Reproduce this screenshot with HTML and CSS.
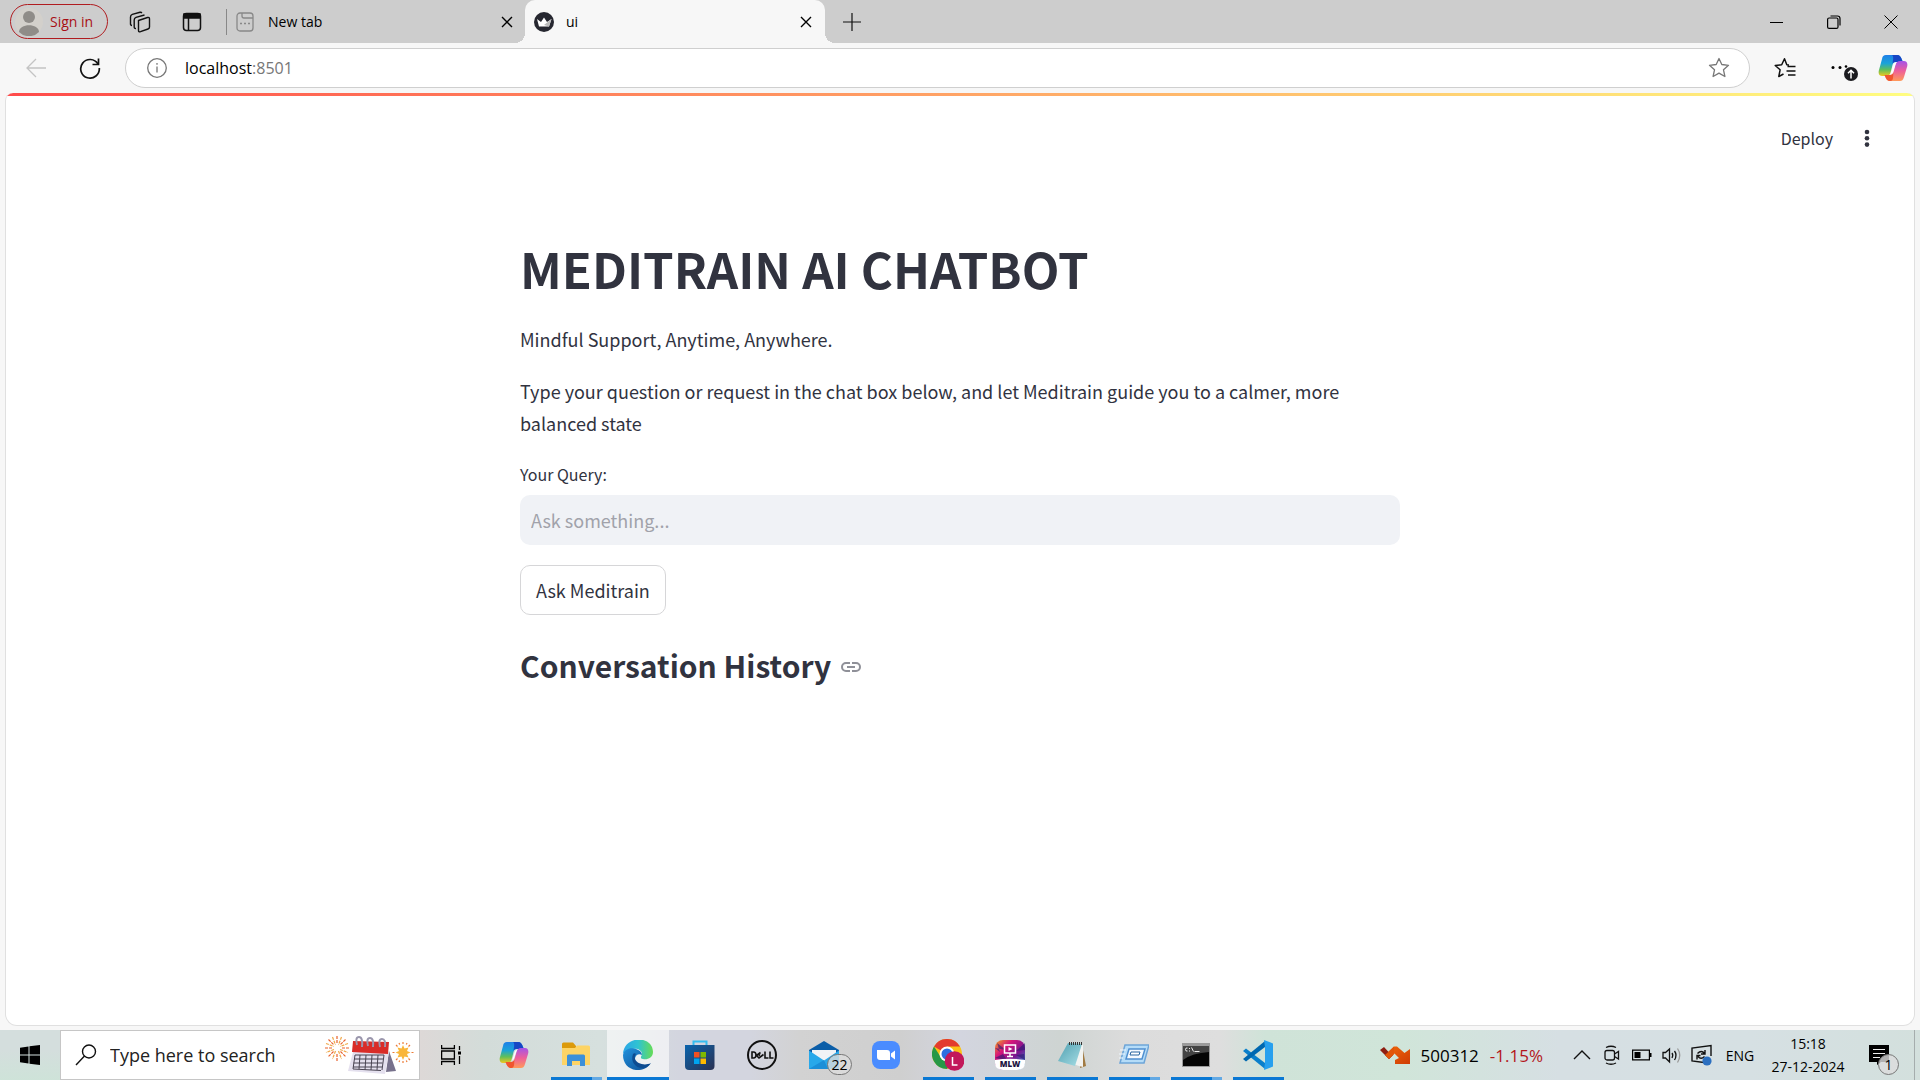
FILE: index.html
```html
<!DOCTYPE html>
<html lang="en">
<head>
<meta charset="utf-8">
<title>ui</title>
<link rel="stylesheet" href="styles.css">
</head>
<body>
<svg class="defs" aria-hidden="true">
  <defs>
    <linearGradient id="cpA" x1="0" y1="0" x2="0" y2="1"><stop offset="0" stop-color="#1f7fe8"/><stop offset=".4" stop-color="#1aa3d8"/><stop offset=".7" stop-color="#5fbf5a"/><stop offset="1" stop-color="#f0c81e"/></linearGradient>
    <linearGradient id="cpB" x1="0" y1="0" x2="0" y2="1"><stop offset="0" stop-color="#a453e8"/><stop offset=".5" stop-color="#ee5f9a"/><stop offset="1" stop-color="#ff9a5a"/></linearGradient>
    <linearGradient id="edA" x1="0" y1="0" x2="1" y2="0"><stop offset="0" stop-color="#2ba5e8"/><stop offset=".5" stop-color="#2fc3d2"/><stop offset="1" stop-color="#66dc55"/></linearGradient>
    <linearGradient id="edB" x1="0" y1="0" x2="1" y2="1"><stop offset="0" stop-color="#2391dc"/><stop offset="1" stop-color="#0c4f96"/></linearGradient>
    <linearGradient id="stA" x1="0" y1="0" x2="1" y2="1"><stop offset="0" stop-color="#0a64ad"/><stop offset="1" stop-color="#2b3152"/></linearGradient>
    <linearGradient id="mlA" x1="0" y1="0" x2="1" y2="1"><stop offset="0" stop-color="#f2a21e"/><stop offset=".3" stop-color="#d5157a"/><stop offset=".6" stop-color="#7a1590"/><stop offset="1" stop-color="#22a6d8"/></linearGradient>
    <linearGradient id="npA" x1="0" y1="0" x2="1" y2="1"><stop offset="0" stop-color="#4f9fb0"/><stop offset="1" stop-color="#a9dfe6"/></linearGradient>
    <linearGradient id="upA" x1="0" y1="0" x2="1" y2="1"><stop offset="0" stop-color="#f06a0a"/><stop offset="1" stop-color="#cf3c05"/></linearGradient>
    <symbol id="copilot" viewBox="0 0 30 28">
      <path d="M8 1h11c3 0 4 2 5 5l1 2h-7c-2 0-3 1-3.500 3L13 17c-1 4-2 5-5 5H4c-3 0-4-3-3-6L4 5c.6-3 1.500-4 4-4z" fill="url(#cpA)"/>
      <path d="M14 1h5c3 0 4 2 5 5l1 2h-7c-2 0-3 .5-3.500 2C15 6 16 2 14 1z" fill="#1746c4"/>
      <path d="M22 27H12c-3 0-4-2-5-5l-.5-1H12c2 0 3-1 3.500-3l2-7c1-3 2-4 4.500-4h4c3 0 4 3 3 6l-3 10c-1 3-2 4-4 4z" fill="url(#cpB)"/>
      <path d="M6.500 21H12c2 0 3-1 3.500-3-.5 5 0 9-3 9s-4.500-2-5.500-5z" fill="#f0552f"/>
      <path d="M18.500 8.500q-2 0-2.800 2.500L13 19.500q1.500-.3 2-2L17.500 10q.5-1.500 1-1.500z" fill="#fff"/>
    </symbol>
    <symbol id="close" viewBox="0 0 12 12"><path d="M1 1l10 10M11 1L1 11" stroke="currentColor" stroke-width="1.4"/></symbol>
  </defs>
</svg>

<header class="browser">
  <div class="tabstrip">
    <button class="signin"><svg class="avatar" viewBox="0 0 28 28"><circle cx="14" cy="14" r="14" fill="#d3d0cb"/><circle cx="14" cy="9" r="6" fill="#8f8c88"/><path d="M4 24c0-9 20-9 20 0a14 14 0 0 1-20 0z" fill="#8f8c88"/></svg>Sign in</button>
    <button class="strip-btn" aria-label="Workspaces"><svg width="22" height="22" viewBox="0 0 22 22" fill="none" stroke="#111" stroke-width="1.4"><path d="M9.500 9.500l9-3q2-.5 2 1.500v8q0 1.500-1.500 2l-7.500 2.700q-2 .6-2-1.300z"/><path d="M7 17.500q-1.800.2-1.800-1.500V9q0-2 1.800-2.700L15.500 4"/><path d="M3 14.500q-1.500 0-1.500-1.500V6q0-2 1.800-2.600L11 1.300q1.300-.3 1.800.8"/></svg></button>
    <button class="strip-btn" aria-label="Tab actions"><svg width="20" height="20" viewBox="0 0 20 20" fill="none" stroke="#111" stroke-width="1.500"><rect x="1.500" y="1.500" width="17" height="17" rx="3"/><path d="M2 2h16v4H2z" fill="#111"/><path d="M6.500 6v12"/></svg></button>
    <div class="tab tab-idle"><svg width="18" height="20" viewBox="0 0 18 20" fill="none" stroke="#888" stroke-width="1.300"><rect x="1" y="1" width="16" height="18" rx="3"/><path d="M6 1v3q0 2 2 2h9M4 11.500h2M8 11.500h2M12 11.500h2"/></svg><span class="tab-title">New tab</span><button class="tab-close" aria-label="Close tab"><svg width="12" height="12"><use href="#close"/></svg></button></div>
    <div class="tab tab-active"><svg width="20" height="20" viewBox="0 0 20 20"><circle cx="10" cy="10" r="10" fill="#262730"/><path d="M3 7l4 3 3-4.500L13 10l4.500-3-2.500 7.500H5z" fill="#fff"/><path d="M17.500 7L10 13l5 1.500z" fill="#bbb"/></svg><span class="tab-title">ui</span><button class="tab-close" aria-label="Close tab"><svg width="12" height="12"><use href="#close"/></svg></button></div>
    <button class="new-tab" aria-label="New tab"><svg width="18" height="18" viewBox="0 0 18 18" stroke="#111" stroke-width="1.200"><path d="M9 0v18M0 9h18"/></svg></button>
    <div class="window-controls">
      <button aria-label="Minimize"><svg width="14" height="14" viewBox="0 0 14 14" stroke="#000"><path d="M0 7.500h13"/></svg></button>
      <button aria-label="Restore"><svg width="14" height="14" viewBox="0 0 14 14" fill="none" stroke="#000" stroke-width="1.200"><rect x=".6" y="3" width="10.400" height="10.400" rx="1.500"/><path d="M3.500 1h7q2.500 0 2.500 2.500v7"/></svg></button>
      <button aria-label="Close window"><svg width="14" height="14" viewBox="0 0 14 14" stroke="#000"><path d="M.5.5l13 13M13.500.5l-13 13"/></svg></button>
    </div>
  </div>
  <div class="toolbar">
    <button class="tool" aria-label="Back"><svg width="20" height="20" viewBox="0 0 20 20" fill="none" stroke="#c4c4c4" stroke-width="1.300"><path d="M20 10H1M10 1L1 10l9 9"/></svg></button>
    <button class="tool" aria-label="Reload"><svg width="22" height="22" viewBox="0 0 22 22" fill="none" stroke="#111" stroke-width="1.700"><path d="M19 7A9.300 9.300 0 1 0 20.300 11"/><path d="M19.500 1.500V7.500H13.500"/></svg></button>
    <div class="address">
      <svg width="20" height="20" viewBox="0 0 20 20" fill="none" stroke="#777" stroke-width="1.300"><circle cx="10" cy="10" r="9.300"/><path d="M10 8.500v6M10 5v1.700"/></svg>
      <a class="url" href="#"><span>localhost</span><span class="port">:8501</span></a>
      <button aria-label="Add to favorites"><svg width="22" height="22" viewBox="0 0 22 22" fill="none" stroke="#777" stroke-width="1.300" stroke-linejoin="round"><path d="M11 1.500l2.800 6 6.700.8-5 4.500 1.400 6.700-5.900-3.400-5.900 3.400 1.400-6.700-5-4.500 6.700-.8z"/></svg></button>
    </div>
    <button class="tool" aria-label="Favorites"><svg width="22" height="22" viewBox="0 0 22 22" fill="none" stroke="#111" stroke-width="1.500" stroke-linejoin="round"><path d="M15 8l-2.200-.3L10.500 1.800 7.700 7.700 1.200 8.500l4.900 4.300-1.300 6.700L9.500 17M13.500 9.500H21.500M12.500 14h9M14 18h7.500"/></svg></button>
    <button class="tool" aria-label="Settings and more"><svg width="42" height="28" viewBox="0 0 42 28"><circle cx="15" cy="13.500" r="1.500"/><circle cx="22" cy="13.500" r="1.500"/><circle cx="28" cy="12.500" r="1.300"/><circle cx="33" cy="20" r="7" fill="#1b1b1f"/><path d="M33 24.500v-8M30 19.300l3-3 3 3" stroke="#fff" stroke-width="1.500" fill="none"/></svg></button>
    <button class="tool" aria-label="Copilot"><svg width="30" height="28"><use href="#copilot"/></svg></button>
  </div>
</header>

<main class="page">
  <div class="app-bar"><button>Deploy</button><button class="kebab" aria-label="Main menu"><svg width="6" height="20" viewBox="0 0 6 20" fill="#31333f"><circle cx="3" cy="4" r="2.300"/><circle cx="3" cy="10.300" r="2.300"/><circle cx="3" cy="16.600" r="2.300"/></svg></button></div>
  <form class="content">
    <h1>MEDITRAIN AI CHATBOT</h1>
    <p>Mindful Support, Anytime, Anywhere.</p>
    <p>Type your question or request in the chat box below, and let Meditrain guide you to a calmer, more balanced state</p>
    <label for="query">Your Query:</label>
    <input id="query" type="text" placeholder="Ask something...">
    <button class="ask" type="button">Ask Meditrain</button>
    <h2>Conversation History <a href="#" aria-label="Link to heading"><svg width="20" height="10" viewBox="0 0 20 10" fill="none" stroke="#8f9098" stroke-width="2"><path d="M9 1H5a4 4 0 0 0 0 8h4M11 1h4a4 4 0 0 1 0 8h-4M6 5h8"/></svg></a></h2>
  </form>
</main>

<footer class="taskbar">
  <button class="start" aria-label="Start"><svg width="20" height="20" viewBox="0 0 20 20"><path d="M0 2.700L8.500 1.500V9.500H0zM9.500 1.300L20 0v9.500H9.500zM0 10.500h8.500v8L0 17.300zM9.500 10.500H20V20L9.500 18.700z"/></svg></button>
  <label class="search">
    <svg width="22" height="22" viewBox="0 0 22 22" fill="none" stroke="#111" stroke-width="1.400"><circle cx="14" cy="7.500" r="6.500"/><path d="M9.500 12L1 21"/></svg>
    <input type="text" placeholder="Type here to search" aria-label="Search">
    <svg width="90" height="40" viewBox="0 0 90 40">
      <g fill="none" stroke-width="1.200" stroke-dasharray="3 1"><g stroke="#e8622d"><path d="M13 1v7M13 19v7M1 13h7M18 13h7M4.500 4.500l5 5M16.500 16.500l5 5M21.500 4.500l-5 5M9.500 16.500l-5 5"/></g><g stroke="#f0a848"><path d="M8.500 2l3 8M14.500 16l3 8M2 8.500l8 3M16 14.500l8 3M17.500 2l-3 8M11.500 16l-3 8M24 8.500l-8 3M10 14.500l-8 3"/></g></g>
      <path d="M65 16l7 20-10 1z" fill="#77718c"/><path d="M29 17h36l-4 22-37-3z" fill="#e4e0ee"/><path d="M29 6l36 1-1 12-36-2z" fill="#d92c28"/>
      <path d="M31 20h29M30 24h29M29.500 28h29M29 32h29M31 20l-2 14M36 20l-1 14M42 20l-1 15M48 20l-1 15M54 20l-1 15M60 20l-2 15M29 34l28 1.500" stroke="#494452" stroke-width="1" fill="none"/>
      <g fill="none" stroke="#9a96ac" stroke-width="2"><path d="M33 10q-2-8 2-8t3 10M44 11q-2-8 2-8t3 9M56 12q-2-8 2-8t3 8"/></g>
      <path d="M79 10l1.500 3.500 4-1-1.500 3.500 3.500 1.500-3.500 1.500 1.500 3.500-4-1L79 25l-1.500-3.500-4 1 1.500-3.500-3.500-1.500 3.500-1.500-1.500-3.500 4 1z" fill="#f9b63a"/><path d="M79 7v2M79 26v2M68.500 17.500h2M87.500 17.500h2M72 10l1.500 1.500M86 25l-1.500-1.500M72 25l1.500-1.500M86 10l-1.500 1.500M75 8l.7 1.500M83 8l-.7 1.500M75 27l.7-1.500M83 27l-.7-1.500" stroke="#ec7c37" stroke-width="1.200"/>
    </svg>
  </label>
  <button class="app" aria-label="Task view"><svg width="20" height="20" viewBox="0 0 20 20" fill="none" stroke="#000" stroke-width="1.300"><path d="M.6 0v3.500h12.800V0M.6 6h12.800v8H.6zM.6 20v-3.500h12.800V20M18.500 1v4M18.500 11v8"/><path d="M17 6.500h3v3h-3z" fill="#000" stroke="none"/></svg></button>
  <nav class="apps">
    <button class="app" aria-label="Copilot"><svg width="30" height="28"><use href="#copilot"/></svg></button>
    <button class="app open stacked" aria-label="File Explorer"><svg width="28" height="26" viewBox="0 0 28 26"><path d="M0 2q0-1.500 1.500-1.500H11l3 3.500v6H0z" fill="#dc9a0a"/><path d="M0 6h13l2-2.500h11.500q1.500 0 1.500 1.500v18H0z" fill="#fdd465"/><path d="M5 24V14q0-1.500 1.500-1.500h15q1.500 0 1.500 1.500v10h-5v-5h-8v5z" fill="#3c90d8"/></svg></button>
    <button class="app open current" aria-label="Edge"><svg width="30" height="30" viewBox="0 0 30 30"><path d="M0 14C1-5 30-5 30 12c0 6-6 8-10 7-4-1-1-3-1-5 0-4-5-6-9-5C5 9.500 1 12 0 14z" fill="url(#edA)"/><path d="M0 15c1-6 8-8 13-6 3 1 6 3 6 6-3-2-7 0-7 4 0 6 8 8 15 5-4 6-10 6-14 6C5 29 0 23 0 15z" fill="url(#edB)"/><path d="M10 14c-3 8 3 15 11 14 3-1 5-2 7-5-6 3-14 1-16-4-.5-2 0-4 1-5-1-1-2-1-3 0z" fill="#0d4c91"/></svg></button>
    <button class="app" aria-label="Store"><svg width="30" height="30" viewBox="0 0 30 30"><path d="M8.500 6V1.500h13V6" fill="none" stroke="#35bdf0" stroke-width="2"/><path d="M0 5h29.500v21q0 4-4 4H4q-4 0-4-4z" fill="url(#stA)"/><path d="M9 12h5.500v5.500H9z" fill="#f25022"/><path d="M15.500 12H21v5.500h-5.500z" fill="#7fba00"/><path d="M9 18.500h5.500V24H9z" fill="#00a4ef"/><path d="M15.500 18.500H21V24h-5.500z" fill="#ffb900"/></svg></button>
    <button class="app" aria-label="Dell"><svg width="30" height="30" viewBox="0 0 30 30" fill="none" stroke="#111" stroke-width="2"><circle cx="15" cy="15" r="14"/><path d="M5 12v6h1.500q2.500 0 2.500-3t-2.500-3zM9.500 15.500l4-3M10 16l2 2 4.500-3.500M11.500 14.500l1.500 1M18 11.500V18h3.500M23 11.500V18h3.500" stroke-width="1.600"/></svg></button>
    <button class="app" aria-label="Mail"><svg width="30" height="28" viewBox="0 0 30 28"><path d="M0 9L15 0l15 9v6H0z" fill="#0b5ea8"/><path d="M3 9h24v12H3z" fill="#f1f3f6"/><path d="M0 9.500l15 10L30 9.500V28H0z" fill="#28a8ea"/><path d="M0 28l15-9 4 9z" fill="#1b8fd8"/></svg><span class="count">22</span></button>
    <button class="app" aria-label="Zoom"><svg width="28" height="28" viewBox="0 0 28 28"><rect width="28" height="28" rx="8" fill="#4a8cff"/><path d="M5 9h10q3 0 3 3v7H8q-3 0-3-3zM19 12.500l4-3v9l-4-3z" fill="#fff"/></svg></button>
    <button class="app open" aria-label="Chrome"><svg width="32" height="32" viewBox="0 0 32 32"><circle cx="15" cy="15" r="15" fill="#fbc116"/><path d="M15 15L2 7.500A15 15 0 0 1 28 7.500H15z" fill="#e33b2e"/><path d="M2 7.500A15 15 0 0 0 15 30l6-11.500-6 3-6-3z" fill="#279847"/><circle cx="15" cy="15" r="7.500" fill="#fff"/><circle cx="15" cy="15" r="5.500" fill="#2c6fe0"/><circle cx="22.500" cy="22" r="9.800" fill="#c2185b"/><path d="M20.500 18v8h5" stroke="#fff" stroke-width="1.500" fill="none"/></svg></button>
    <button class="app open" aria-label="MLW"><svg width="30" height="30" viewBox="0 0 30 30"><rect width="30" height="30" rx="8" fill="url(#mlA)"/><path d="M0 8l5 4-3-9 9 7zM30 3l-9 8 9-1zM0 18l8-4 4 6zM30 20l-9-5 8-1z" fill="#2a1a70" opacity=".6"/><path d="M0 20q15-2.500 30 0v3q0 7-8 7H8q-8 0-8-7z" fill="#fff"/><path d="M9.500 5h11v8h-11zM15 13v4M12 16.500h6" fill="none" stroke="#fff" stroke-width="1.500"/><path d="M13.500 7l4 2-4 2z" fill="#fff"/><text x="15" y="27" class="mlw">MLW</text></svg></button>
    <button class="app open" aria-label="Notepad"><svg width="28" height="28" viewBox="0 0 28 28"><path d="M24 4l4 21-6 2z" fill="#a17a42"/><path d="M21 3l4 1v22l-4-1-6-2z" fill="#f2f3f1"/><path d="M10 2l14 1-7 22L0 20z" fill="url(#npA)"/><path d="M11 2.500h13.500" stroke="#333" stroke-width="3" stroke-dasharray="1 1"/></svg></button>
    <button class="app open stacked" aria-label="Run"><svg width="30" height="24" viewBox="0 0 30 24"><path d="M6 2h24l-5 18H1z" fill="#b5dcf8" stroke="#6da5d8" stroke-width="1.500"/><path d="M10 6h16l-3 10H7z" fill="#f5faff" stroke="#4f8fd0" stroke-width="1.500"/><path d="M12 9h9l-1 3h-9z" fill="#fff" stroke="#28649f"/><path d="M1 7h6M0 11h6M0 15h4" stroke="#eef7ff"/></svg></button>
    <button class="app open stacked" aria-label="Command Prompt"><svg width="28" height="24" viewBox="0 0 28 24"><path d="M0 0h28v24H0z" fill="#9b9b9b"/><path d="M1 3h26v20H1z" fill="#050505"/><path d="M1 3h26v6Q10 10 1 17z" fill="#444"/><path d="M5.500 5q-2-.5-2 1.500t2 1.500M7.500 5v1M7.500 7.500v1M9.500 4.500l2 4M12.500 8.500h5" stroke="#eee" fill="none"/></svg></button>
    <button class="app open" aria-label="Visual Studio Code"><svg width="30" height="30" viewBox="0 0 30 30"><path d="M0 11l3-2.500L22 23v6z" fill="#0a7fcb"/><path d="M0 19l3 2.500L22 7V1z" fill="#0068b0"/><path d="M21 0l9 3.500v23L21 30l1-7V7z" fill="#27a0ee"/></svg></button>
  </nav>
  <div class="tray">
    <button class="stock"><svg width="30" height="18" viewBox="0 0 30 18"><path d="M5 9l9-8.500h3l7.500 6.500L30 3v15H15v-4l4-2-4.500-4.500L9 13z" fill="url(#upA)"/><path d="M0 4l4-3 5.500 6L13 3.500V9l-4 4z" fill="#8e1f12"/><path d="M5 9l9-8.500V8L9 13z" fill="#e25508"/></svg><span>500312</span><span class="loss">-1.15%</span></button>
    <button class="icon" aria-label="Show hidden icons"><svg width="18" height="10" viewBox="0 0 18 10" fill="none" stroke="#111" stroke-width="1.400"><path d="M1 9l8-8 8 8"/></svg></button>
    <button class="icon" aria-label="Meet Now"><svg width="16" height="20" viewBox="0 0 16 20" fill="none" stroke="#111" stroke-width="1.300"><rect x="1" y="5.500" width="9.500" height="9.500" rx="2"/><path d="M10.500 9l4-2.500v7.500l-4-2.500M2 2.500q5-2.500 10 0M2 18q5 2.500 10 0"/></svg></button>
    <button class="icon" aria-label="Battery"><svg width="20" height="12" viewBox="0 0 20 12"><path d="M.6 1.100h16.800v9.800H.6z" fill="none" stroke="#000" stroke-width="1.200"/><path d="M2.500 3h6v6h-6zM18 4h1.500v4H18z"/></svg></button>
    <button class="icon" aria-label="Volume"><svg width="20" height="18" viewBox="0 0 20 18" fill="none" stroke="#111" stroke-width="1.300"><path d="M1 6.500h2.500L7.500 3v13L3.500 12H1zM10 7q1.500 2 0 5M12.500 5q3 4 0 9"/><path d="M15.500 2.500q4.500 6.500 0 14" stroke="#999"/></svg></button>
    <button class="icon" aria-label="Update"><svg width="22" height="22" viewBox="0 0 22 22" fill="none" stroke="#111" stroke-width="1.400"><path d="M13 18.500L1 17V4l19-2.500V12"/><path d="M6.500 9.500q4-4 7 0M14 6v4h-4M13.500 12.500q-3.500 3.500-6.500 0M6 15.500v-4h3.500"/><circle cx="16" cy="17" r="4.600" fill="#2b6fc0" stroke="none"/></svg></button>
    <button class="lang">ENG</button>
    <button class="clock"><span>15:18</span><span>27-12-2024</span></button>
    <button class="notify" aria-label="Notifications"><svg width="20" height="20" viewBox="0 0 20 20"><path d="M0 0h20v17h-8l-4 3v-3H0z"/><path d="M4 4.500h12M4 8.500h12M4 12.500h7" stroke="#eee" stroke-width="1.200"/></svg><span class="count">1</span></button>
    <button class="desktop" aria-label="Show desktop"></button>
  </div>
</footer>
</body>
</html>
```
FILE: styles.css
```css
* { box-sizing: border-box; }
body {
  margin: 0;
  min-height: 100vh;
  display: flex;
  flex-direction: column;
  background: #f7f7f7;
  color: #000;
  font-family: "Open Sans", "Noto Sans", sans-serif;
}
button { border: 0; padding: 0; background: none; font: inherit; color: inherit; }
svg { display: block; flex: none; }
.defs { position: absolute; width: 0; height: 0; }

/* Tab strip */
.tabstrip { display: flex; align-items: center; height: 43px; padding-left: 10px; background: #cdcdcd; font-size: 14px; line-height: 18px; }
.signin { display: flex; align-items: center; gap: 7px; width: 98px; height: 35px; padding-left: 4px; border: 1px solid #b01c20; border-radius: 18px; color: #a80f14; }
.avatar { width: 28px; height: 28px; }
.strip-btn { display: grid; place-items: center; width: 52px; height: 43px; margin-left: 6px; }
.strip-btn + .strip-btn { margin-left: 0; }
.tab { display: flex; align-items: center; gap: 14px; height: 43px; }
.tab-title { flex: 1; }
.tab-close { display: grid; place-items: center; width: 24px; height: 24px; }
.tab-idle { position: relative; width: 307px; padding: 0 6px 0 18px; }
.tab-idle::before { content: ""; position: absolute; left: 8px; top: 9px; width: 1px; height: 26px; background: #888; }
.tab-active { position: relative; width: 300px; padding: 0 7px 0 9px; gap: 12px; border-radius: 10px 10px 0 0; background: #f7f7f7; }
.tab-active::before, .tab-active::after { content: ""; position: absolute; bottom: 0; width: 10px; height: 10px; }
.tab-active::before { left: -10px; background: radial-gradient(circle at 0 0, #cdcdcd 10px, #f7f7f7 10px); }
.tab-active::after { right: -10px; background: radial-gradient(circle at 100% 0, #cdcdcd 10px, #f7f7f7 10px); }
.new-tab { display: grid; place-items: center; width: 54px; height: 43px; }
.window-controls { display: flex; margin-left: auto; padding-right: 1px; }
.window-controls button { display: grid; place-items: center; width: 57px; height: 42px; }

/* Toolbar */
.toolbar { display: flex; align-items: center; height: 50px; padding-left: 9px; }
.tool { display: grid; place-items: center; width: 54px; height: 40px; }
.address { flex: 1; display: flex; align-items: center; height: 40px; margin: 0 8px; padding: 0 19px 0 21px; border: 1px solid #cfcfcf; border-radius: 20px; background: #fff; }
.url { flex: 1; margin-left: 18px; font-size: 16px; color: #000; text-decoration: none; }
.port { color: #777; }

/* Page */
.page {
  flex: 1;
  margin: 0 5px 4px;
  border: 1px solid #e0e0e0;
  border-top: 0;
  border-radius: 8px 8px 12px 12px;
  background: linear-gradient(90deg, #ff4b4b, #fffd80) 0 0 / 100% 3px no-repeat #fff;
  color: #31333f;
  font-family: "Noto Sans CJK SC", "Noto Sans", sans-serif;
}
.app-bar { display: flex; justify-content: flex-end; align-items: center; gap: 31px; height: 90px; padding-right: 44px; font-size: 16px; }
.kebab { display: grid; place-items: center; }
.content { display: flex; flex-direction: column; align-items: flex-start; max-width: 880px; margin: 0 auto; padding: 55px 0 40px; }
h1, h2, p { margin: 0; }
h1 { font-size: 49px; line-height: 60px; font-weight: 700; }
p { margin-top: 20px; font-size: 18px; line-height: 32px; }
h1 + p { margin-top: 25px; }
.content label { margin-top: 23px; font-size: 16px; line-height: 24px; }
#query { width: 100%; height: 50px; margin-top: 9px; padding: 0 11px; border: 0; border-radius: 10px; background: #f0f2f6; font: inherit; font-size: 18px; color: #31333f; }
#query::placeholder { color: #a1a2aa; opacity: 1; }
.ask { height: 50px; margin-top: 20px; padding: 0 15px; border: 1px solid #d6d6d8; border-radius: 10px; background: #fff; font-size: 18px; }
h2 { display: flex; align-items: center; gap: 10px; margin-top: 28px; font-size: 30px; line-height: 44px; font-weight: 700; }
h2 a { padding-top: 4px; }

/* Taskbar */
.taskbar {
  display: flex;
  height: 50px;
  background:
    linear-gradient(0deg, rgba(200, 232, 212, .5), transparent 60%) 0 0 / 60px 100% no-repeat,
    linear-gradient(90deg, #d4dedd 0, #d4dedd 60px, #ddd8d7 420px, #d3dcd9 485px, #d6e0de 600px, #d3d5df 680px, #d3d5df 750px, #d2d2d2 800px, #cfcfcf 900px, #d3d5df 960px, #ced4d2 1060px, #dcdcdc 1130px, #dedede 1220px, #cfe3d8 1265px, #d0e5d9 1400px, #d6dfe3 1560px, #d6e0e3 1750px, #d3e0dd 100%);
}
.start { display: grid; place-items: center; width: 60px; }
.search { display: flex; align-items: center; width: 360px; padding: 0 5px 0 14px; border: 1px solid #c6c6c6; background: #fff; }
.search input { flex: 1; min-width: 0; padding: 0; margin-left: 13px; border: 0; outline: 0; background: none; font: inherit; font-size: 18px; }
.search input::placeholder { color: #222; opacity: 1; }
.apps { display: flex; margin-left: 1px; }
.app { position: relative; display: grid; place-items: center; width: 62px; height: 50px; }
.open::after { content: ""; position: absolute; left: 6px; right: 5px; bottom: 0; height: 3px; background: #0a78d4; }
.stacked::after { background: linear-gradient(90deg, #0a78d4 41px, #63a9e4 41px); }
.current { background: rgba(255, 255, 255, .6); }
.current::after { left: 0; right: 0; }
.count { position: absolute; display: grid; place-items: center; min-width: 21px; height: 21px; border: 1px solid #777; border-radius: 11px; background: rgba(220, 220, 220, .8); font-size: 14px; line-height: 14px; }
.app .count { left: 34px; top: 24px; width: 25px; }
.mlw { font: 900 8px "Open Sans", sans-serif; text-anchor: middle; fill: #1b1340; }
.tray { display: flex; margin-left: auto; font-size: 17px; }
.stock { display: flex; align-items: center; gap: 11px; padding-right: 24px; }
.loss { color: #b3161b; }
.icon { display: grid; place-items: center; width: 30px; }
.lang { width: 46px; font-size: 14px; }
.clock { display: flex; flex-direction: column; align-items: center; justify-content: center; width: 90px; font-size: 14px; line-height: 23px; }
.notify { position: relative; display: grid; place-items: center; width: 61px; padding-right: 9px; }
.notify .count { left: 25px; top: 24px; }
.desktop { width: 6px; border-left: 1px solid #a5adad; }
```
